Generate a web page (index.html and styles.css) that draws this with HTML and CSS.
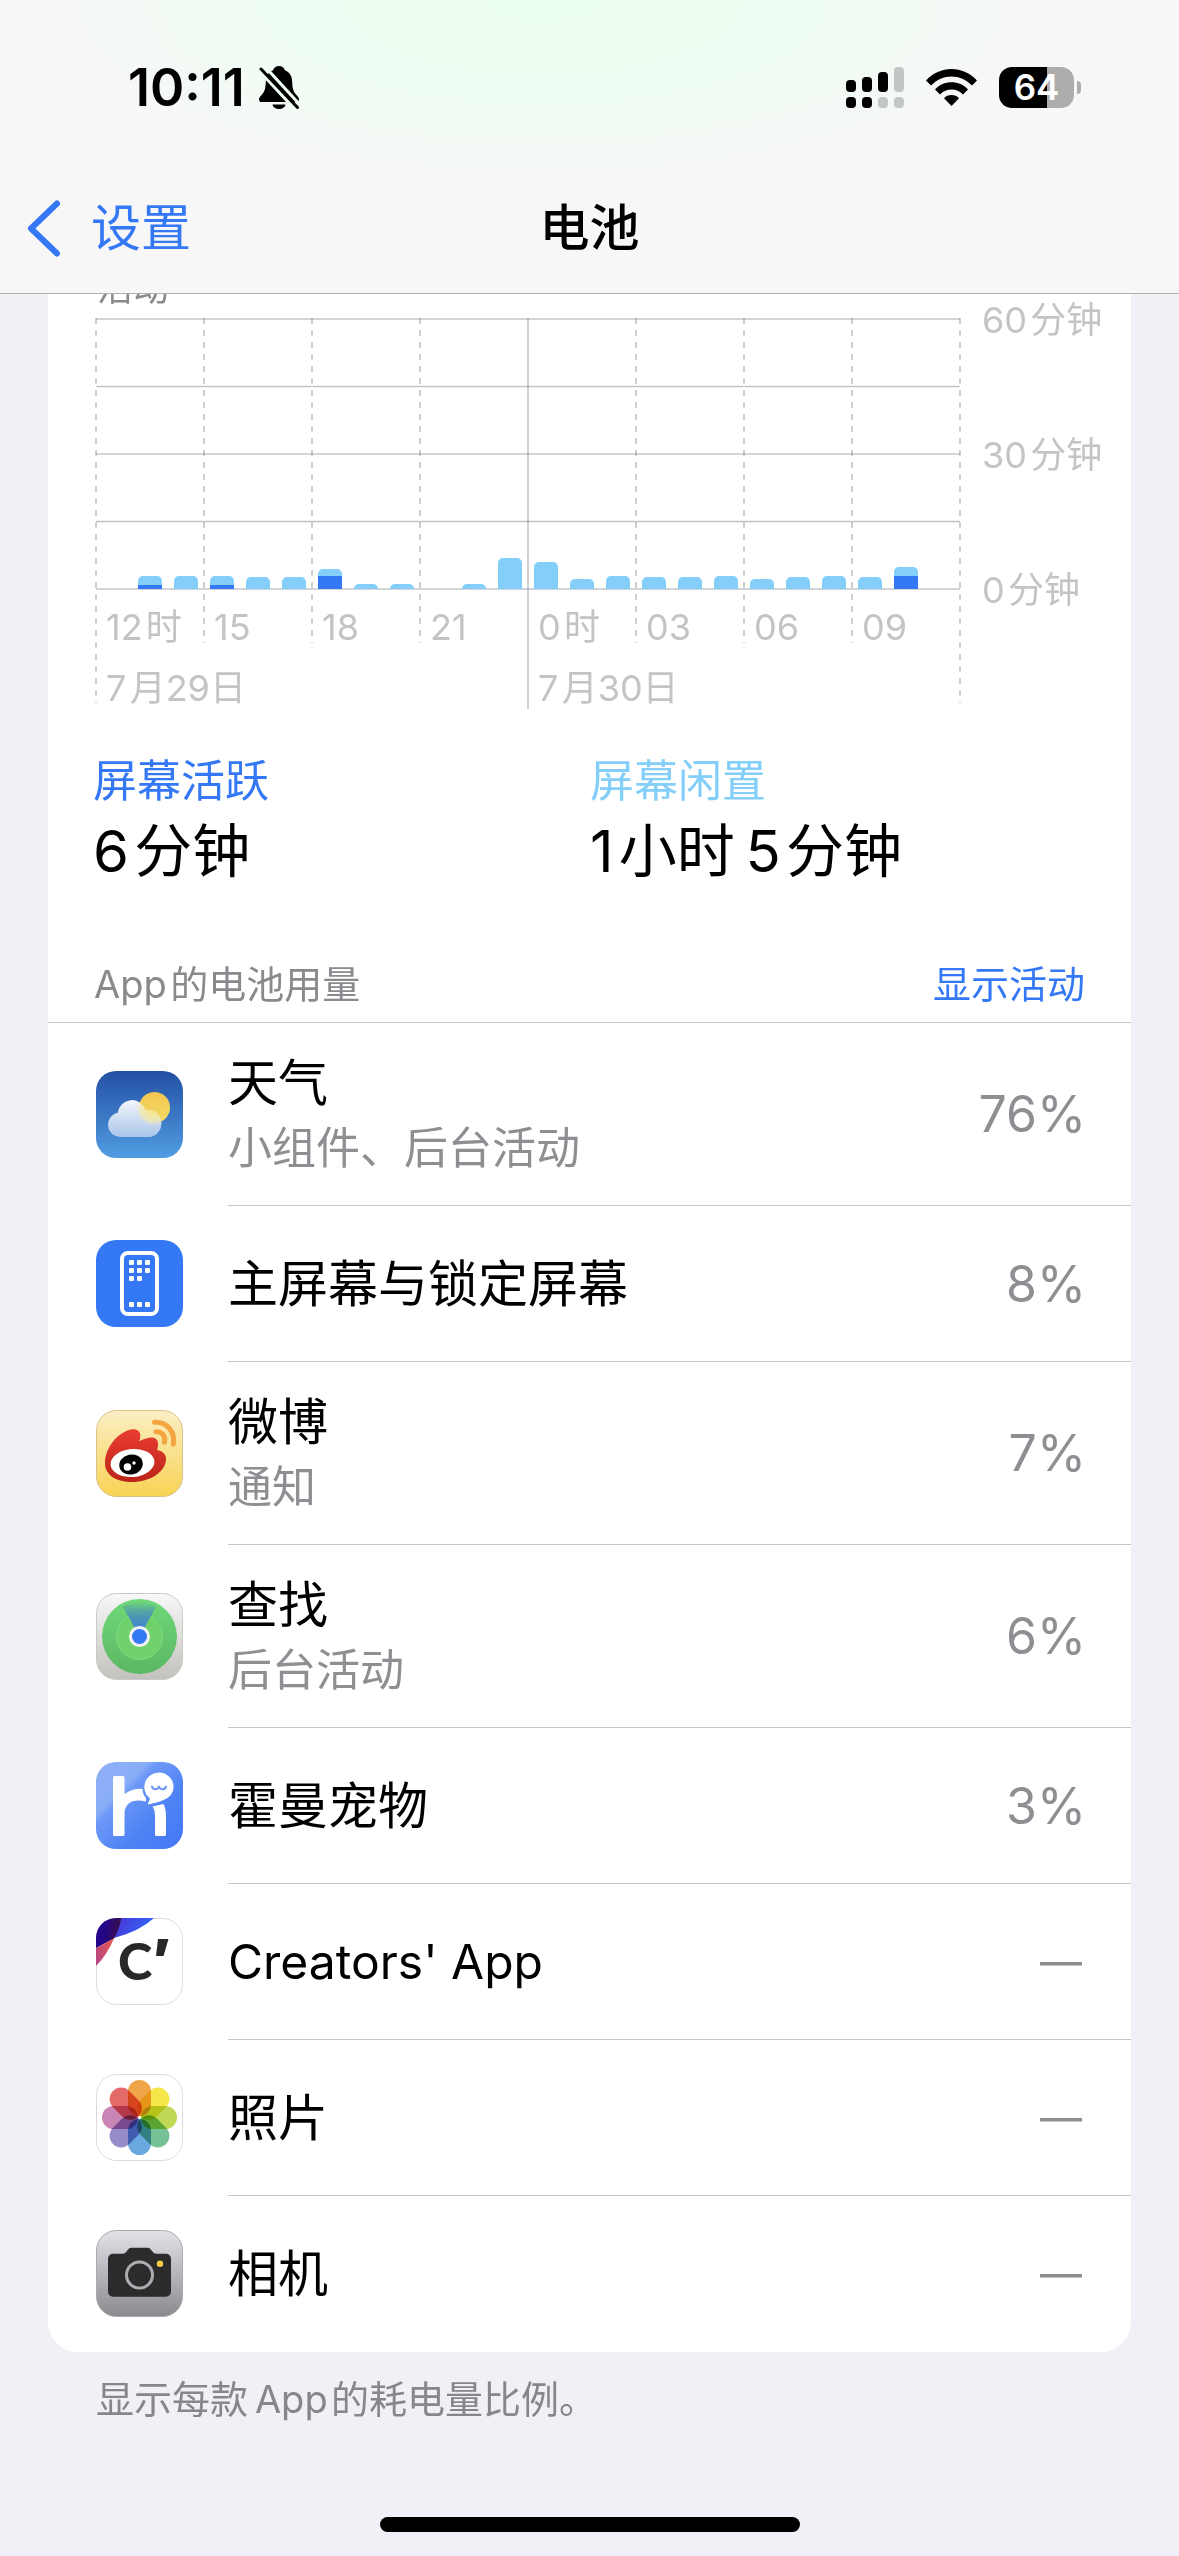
FILE: index.html
```html
<!DOCTYPE html>
<html lang="zh-CN">
<head>
<meta charset="utf-8">
<meta name="viewport" content="width=device-width, initial-scale=1">
<title>电池</title>
<link rel="stylesheet" href="styles.css">
</head>
<body>
<header class="topbar">
  <div class="status">
    <div class="status-left">
      <time class="clock">10:11</time>
      <svg class="bell" viewBox="0 0 40 43" width="40" height="43" aria-label="静音">
        <path d="M20 0c-3 0-5.200 1.800-5.900 4.300C9.600 6 7 10 6.800 15.500 6.600 22 6 25 3 28.500 1 30.800 0 32 0 33.400 0 35 1.200 36 3 36h34c1.800 0 3-1 3-2.600 0-1.400-1-2.600-3-4.900-3-3.500-3.600-6.500-3.800-13C33 10 30.400 6 25.900 4.300 25.200 1.800 23 0 20 0z"/>
        <path d="M13.500 38.500h13c-.5 2.800-3.200 4.500-6.500 4.500s-6-1.700-6.500-4.500z"/>
        <path d="M-2 1.500 37 44" stroke="#effdf2" stroke-width="4"/>
        <path d="M4 -1.500 42 40" stroke="#effdf2" stroke-width="3"/>
        <path d="M2 3 38.500 41.500" stroke="#000" stroke-width="3" stroke-linecap="round"/>
      </svg>
    </div>
    <div class="status-right">
      <svg viewBox="0 0 58 41" width="58" height="41" aria-label="信号">
        <g fill="#000"><rect x="0" y="13" width="10" height="12" rx="4"/><rect x="16" y="10" width="10" height="15" rx="4"/><rect x="32" y="5" width="10" height="20" rx="4"/><rect x="0" y="30" width="10" height="11" rx="4"/><rect x="16" y="30" width="10" height="11" rx="4"/></g>
        <g fill="#c2c7c3"><rect x="48" y="0" width="10" height="25" rx="4"/><rect x="32" y="30" width="10" height="11" rx="4"/><rect x="48" y="30" width="10" height="11" rx="4"/></g>
      </svg>
      <svg class="wifi" viewBox="0 0 51 37" width="51" height="37" aria-label="无线局域网">
        <path d="M0 11.500C7 4 16 0 25.500 0S44 4 51 11.500l-5 5C40 10.500 33 7.500 25.500 7.500S11 10.500 5 16.500z"/>
        <path d="M9 20.500C13.500 15.800 19 13.300 25.500 13.300S37.500 15.800 42 20.500l-5 5c-3.300-3.200-7-4.900-11.500-4.900S17.300 22.300 14 25.500z"/>
        <path d="M18 29.300c2-2 4.500-3.200 7.500-3.200s5.500 1.200 7.500 3.200L25.500 37z"/>
      </svg>
      <div class="battery"><span class="battery-body">64</span><span class="battery-cap"></span></div>
    </div>
  </div>
  <nav class="nav">
    <a class="back" href="#settings">
      <svg viewBox="0 0 33 57" width="33" height="57" aria-hidden="true"><path d="M30 3.500 4 28.500 30 53.500" fill="none" stroke="currentColor" stroke-width="6" stroke-linecap="round" stroke-linejoin="round"/></svg>
      <span>设置</span>
    </a>
    <h1 class="title">电池</h1>
  </nav>
</header>

<main class="content">
  <section class="card">
    <h2 class="chart-title">活动</h2>
    <div class="chart">
      <div class="plot">
        <div class="cols">
          <div class="col col-day">12&#8202;时</div><div class="col">15</div><div class="col">18</div><div class="col">21</div>
          <div class="col col-midnight">0&#8202;时</div><div class="col">03</div><div class="col">06</div><div class="col">09</div><div class="col col-day col-end"></div>
        </div>
        <div class="dates"><span>7&#8202;月29日</span><span>7&#8202;月30日</span></div>
        <div class="rules"><i></i><i class="thin"></i><i></i><i class="thin"></i><i></i></div>
        <div class="bars">
          <span></span>
          <span class="bar" style="height:13px"><i style="height:4px"></i></span>
          <span class="bar" style="height:13px"></span>
          <span class="bar" style="height:13px"><i style="height:4px"></i></span>
          <span class="bar" style="height:12px"></span>
          <span class="bar" style="height:12px"></span>
          <span class="bar" style="height:20px"><i style="height:13px"></i></span>
          <span class="bar" style="height:5px"></span>
          <span class="bar" style="height:5px"></span>
          <span></span>
          <span class="bar" style="height:5px"></span>
          <span class="bar" style="height:31px"></span>
          <span class="bar" style="height:27px"></span>
          <span class="bar" style="height:10px"></span>
          <span class="bar" style="height:13px"></span>
          <span class="bar" style="height:12px"></span>
          <span class="bar" style="height:12px"></span>
          <span class="bar" style="height:13px"></span>
          <span class="bar" style="height:10px"></span>
          <span class="bar" style="height:12px"></span>
          <span class="bar" style="height:13px"></span>
          <span class="bar" style="height:12px"></span>
          <span class="bar" style="height:22px"><i style="height:13px"></i></span>
          <span></span>
        </div>
      </div>
      <div class="scale"><span>60&#8202;分钟</span><span>30&#8202;分钟</span><span>0&#8202;分钟</span></div>
    </div>

    <dl class="stats">
      <div><dt class="active">屏幕活跃</dt><dd>6&#8202;分钟</dd></div>
      <div><dt class="idle">屏幕闲置</dt><dd>1&#8202;小时&#8201;5&#8202;分钟</dd></div>
    </dl>

    <div class="usage-head">
      <h2>App&#8202;的电池用量</h2>
      <button type="button">显示活动</button>
    </div>

    <ul class="apps">
      <li class="app tall">
        <svg class="icon" viewBox="0 0 87 87" aria-hidden="true">
          <defs>
            <linearGradient id="sky" x2="0" y2="1"><stop stop-color="#2450a4"/><stop offset="1" stop-color="#509de2"/></linearGradient>
            <linearGradient id="sun" x2="0" y2="1"><stop stop-color="#f0c550"/><stop offset="1" stop-color="#f6de66"/></linearGradient>
            <linearGradient id="cloud" gradientUnits="userSpaceOnUse" x1="0" y1="28" x2="0" y2="66"><stop stop-color="#f5f8fd"/><stop offset="1" stop-color="#a9c5ea"/></linearGradient>
            <radialGradient id="glow" gradientUnits="userSpaceOnUse" cx="58" cy="37" r="18"><stop stop-color="#f6e477"/><stop offset=".7" stop-color="#f3e9a8" stop-opacity=".8"/><stop offset="1" stop-color="#f3e9a8" stop-opacity="0"/></radialGradient>
            <clipPath id="cloudShape"><path d="M25 66a12.300 12.300 0 0 1-3.300-24.300A14.300 14.300 0 0 1 49.500 39 13.600 13.600 0 1 1 54 66z"/></clipPath>
          </defs>
          <rect width="87" height="87" rx="20" fill="url(#sky)"/>
          <circle cx="58.500" cy="36.500" r="15.500" fill="url(#sun)"/>
          <g clip-path="url(#cloudShape)"><rect width="87" height="87" fill="url(#cloud)"/><circle cx="58" cy="37" r="18" fill="url(#glow)"/></g>
        </svg>
        <div class="row"><div class="names"><span class="name">天气</span><span class="detail">小组件、后台活动</span></div><span class="value">76%</span></div>
      </li>
      <li class="app">
        <svg class="icon" viewBox="0 0 87 87" aria-hidden="true">
          <rect width="87" height="87" rx="20" fill="#3478f6"/>
          <rect x="26" y="13" width="35" height="61" rx="6" fill="none" stroke="#fff" stroke-width="4"/>
          <g fill="#fff"><rect x="33" y="20" width="5" height="5" rx="1"/><rect x="41" y="20" width="5" height="5" rx="1"/><rect x="49" y="20" width="5" height="5" rx="1"/><rect x="33" y="28" width="5" height="5" rx="1"/><rect x="41" y="28" width="5" height="5" rx="1"/><rect x="49" y="28" width="5" height="5" rx="1"/><rect x="33" y="36" width="5" height="5" rx="1"/><rect x="41" y="36" width="5" height="5" rx="1"/><rect x="33" y="62" width="5" height="5" rx="1"/><rect x="41" y="62" width="5" height="5" rx="1"/><rect x="49" y="62" width="5" height="5" rx="1"/></g>
        </svg>
        <div class="row"><span class="name">主屏幕与锁定屏幕</span><span class="value">8%</span></div>
      </li>
      <li class="app tall">
        <svg class="icon" viewBox="0 0 87 87" aria-hidden="true">
          <defs>
            <linearGradient id="wbBg" x2="0" y2="1"><stop stop-color="#fbeec4"/><stop offset="1" stop-color="#f8d354"/></linearGradient>
            <linearGradient id="wbRed" x2="0" y2="1"><stop stop-color="#ea3d33"/><stop offset="1" stop-color="#bb2419"/></linearGradient>
          </defs>
          <rect x=".5" y=".5" width="86" height="86" rx="20" fill="url(#wbBg)" stroke="#d6c38a"/>
          <path d="M9 54C8.500 43 15 31 25 24c7-5 14-6 17.500-3 2.500 2.500 2 6 .9 10.200C49 28.500 57 25.500 60.500 29.500c2.300 2.700 1.500 6.500.7 10.500 5.500 1.200 9 4 8.800 9.500C69.500 62 54 72 36 72 20 72 9.500 65 9 54z" fill="url(#wbRed)"/>
          <ellipse cx="36.500" cy="53" rx="22" ry="14" fill="#fff" transform="rotate(-5 36.500 53)"/>
          <ellipse cx="35" cy="54.500" rx="11.800" ry="10" fill="#000" transform="rotate(-12 35 54.500)"/>
          <circle cx="31.500" cy="57" r="3.800" fill="#fff"/><circle cx="38" cy="53" r="1.700" fill="#fff"/>
          <g fill="none" stroke="#f5a53f" stroke-width="5" stroke-linecap="round"><path d="M58.500 12.300C71 11.500 79.500 22 77.300 34.300"/><path d="M60 21.800c6.500-.2 10 4.700 8.300 10.500"/></g>
        </svg>
        <div class="row"><div class="names"><span class="name">微博</span><span class="detail">通知</span></div><span class="value">7%</span></div>
      </li>
      <li class="app tall">
        <svg class="icon" viewBox="0 0 87 87" aria-hidden="true">
          <defs>
            <linearGradient id="fmBg" x2="0" y2="1"><stop stop-color="#f8f8f8"/><stop offset="1" stop-color="#c3c1bc"/></linearGradient>
            <linearGradient id="fmDisc" x2="0" y2="1"><stop stop-color="#6fd878"/><stop offset="1" stop-color="#5bb764"/></linearGradient>
            <linearGradient id="fmBeam" x2="0" y2="1"><stop stop-color="#3c7bd8" stop-opacity="0"/><stop offset=".35" stop-color="#3f83c8" stop-opacity=".7"/><stop offset="1" stop-color="#3478f6"/></linearGradient>
          </defs>
          <rect x=".5" y=".5" width="86" height="86" rx="20" fill="url(#fmBg)" stroke="#c9c9c9"/>
          <circle cx="43.500" cy="43.500" r="37.500" fill="url(#fmDisc)"/>
          <circle cx="43.500" cy="43.500" r="23" fill="#70d26c" stroke="#80dc83"/>
          <path d="M43.500 43.500 26.500 13q17-8 34 0z" fill="url(#fmBeam)"/>
          <circle cx="43.500" cy="43.500" r="9" fill="#3478f6" stroke="#f2f1f7" stroke-width="3"/>
        </svg>
        <div class="row"><div class="names"><span class="name">查找</span><span class="detail">后台活动</span></div><span class="value">6%</span></div>
      </li>
      <li class="app">
        <svg class="icon" viewBox="0 0 87 87" aria-hidden="true">
          <defs><linearGradient id="petBg" x2="1" y2="1"><stop stop-color="#8fb0f8"/><stop offset=".3" stop-color="#8aadf8"/><stop offset=".36" stop-color="#6c98f6"/><stop offset=".65" stop-color="#4f83f5"/><stop offset="1" stop-color="#4377f5"/></linearGradient></defs>
          <rect width="87" height="87" rx="20" fill="url(#petBg)"/>
          <path d="M18.500 14H27a1.500 1.500 0 0 1 1.500 1.500V32q7-5.500 18-5.300.3 6.500 3.500 9.300V39.500C38 36.500 28.500 40 28.500 52v20.500A1.500 1.500 0 0 1 27 74h-8.500a1.500 1.500 0 0 1-1.500-1.500v-57a1.500 1.500 0 0 1 1.500-1.500z" fill="#fff"/>
          <path d="M56.500 44.500 67.500 42q2.500 4.500 2.500 12v18.500a1.500 1.500 0 0 1-1.500 1.500h-8a1.500 1.500 0 0 1-1.500-1.500V54q0-6-2.500-9.500z" fill="#fff"/>
          <path d="M63 10.500A14.500 14.500 0 0 1 77.500 25C77.500 35 68 39.500 51.700 42.500L54 36.500A14.500 14.500 0 0 1 63 10.500z" fill="#fff"/>
          <path d="M56 24.500c.5 3.500 6 3.500 7 0 1 3.500 6.500 3.500 7 0" fill="none" stroke="#6e98f5" stroke-width="2" stroke-linecap="round" stroke-linejoin="round"/>
        </svg>
        <div class="row"><span class="name">霍曼宠物</span><span class="value">3%</span></div>
      </li>
      <li class="app">
        <svg class="icon" viewBox="0 0 87 87" aria-hidden="true">
          <defs>
            <clipPath id="tile"><rect width="87" height="87" rx="20"/></clipPath>
            <linearGradient id="crBlue" x2="1" y2=".3"><stop stop-color="#4a32d6"/><stop offset="1" stop-color="#3265f6"/></linearGradient>
            <linearGradient id="crDark" x2="1" y2=".2"><stop offset=".4" stop-color="#230688"/><stop offset="1" stop-color="#3a1047"/></linearGradient>
            <linearGradient id="crRed" x1="1" x2="0" y2=".6"><stop stop-color="#ee5a4a"/><stop offset="1" stop-color="#b8487e"/></linearGradient>
          </defs>
          <rect x=".5" y=".5" width="86" height="86" rx="20" fill="#fff" stroke="#dcdcdc"/>
          <g clip-path="url(#tile)">
            <path d="M25 0h33Q44 13 18 20z" fill="url(#crBlue)"/>
            <path d="M0 0h25.500Q23 12 18 20.500L0 30z" fill="url(#crDark)"/>
            <path d="M0 30 18 20.500Q11 37 0 48z" fill="url(#crRed)"/>
          </g>
          <text class="mark" x="22" y="62">C</text>
          <path d="M62 21h10.500L67.500 38H60z" fill="#282828"/>
        </svg>
        <div class="row"><span class="name latin">Creators' App</span><span class="value none">—</span></div>
      </li>
      <li class="app">
        <svg class="icon" viewBox="0 0 87 87" aria-hidden="true">
          <rect x=".5" y=".5" width="86" height="86" rx="20" fill="#fff" stroke="#dcdcdc"/>
          <g class="petals">
            <rect x="32" y="6" width="23" height="36" rx="11.500" fill="#f0a548"/>
            <rect x="32" y="6" width="23" height="36" rx="11.500" fill="#f5e64c" transform="rotate(45 43.500 43.500)"/>
            <rect x="32" y="6" width="23" height="36" rx="11.500" fill="#c0d857" transform="rotate(90 43.500 43.500)"/>
            <rect x="32" y="6" width="23" height="36" rx="11.500" fill="#76c294" transform="rotate(135 43.500 43.500)"/>
            <rect x="32" y="6" width="23" height="36" rx="11.500" fill="#69a8de" transform="rotate(180 43.500 43.500)"/>
            <rect x="32" y="6" width="23" height="36" rx="11.500" fill="#988bca" transform="rotate(225 43.500 43.500)"/>
            <rect x="32" y="6" width="23" height="36" rx="11.500" fill="#c985b5" transform="rotate(270 43.500 43.500)"/>
            <rect x="32" y="6" width="23" height="36" rx="11.500" fill="#e46a68" transform="rotate(315 43.500 43.500)"/>
          </g>
        </svg>
        <div class="row"><span class="name">照片</span><span class="value none">—</span></div>
      </li>
      <li class="app">
        <svg class="icon" viewBox="0 0 87 87" aria-hidden="true">
          <defs><linearGradient id="camBg" x2="0" y2="1"><stop stop-color="#e3e2e8"/><stop offset="1" stop-color="#8b8a8f"/></linearGradient></defs>
          <rect x=".5" y=".5" width="86" height="86" rx="20" fill="url(#camBg)" stroke="#a9a9ae"/>
          <path d="M17 23.700h9.500c5 0 4.500-6 9-6h16c4.500 0 4 6 9 6H70a5 5 0 0 1 5 5v33a5 5 0 0 1-5 5H17a5 5 0 0 1-5-5v-33a5 5 0 0 1 5-5z" fill="#2c2c2c"/>
          <circle cx="43.500" cy="45" r="13" fill="none" stroke="#adadb3" stroke-width="3"/>
          <circle cx="64" cy="33.700" r="3.200" fill="#f8ce46"/>
        </svg>
        <div class="row"><span class="name">相机</span><span class="value none">—</span></div>
      </li>
    </ul>
  </section>
  <p class="footnote">显示每款&#8201;App&#8202;的耗电量比例。</p>
</main>
<div class="home"></div>
</body>
</html>
```
FILE: styles.css
```css
* { box-sizing: border-box; }

body {
  margin: 0;
  min-height: 100vh;
  display: flex;
  flex-direction: column;
  background: #f1f0f6;
  color: #000;
  font-family: Inter, "Noto Sans CJK SC", sans-serif;
  font-size: 50px;
}

h1, h2, p, ul, dl, dd { margin: 0; padding: 0; font-weight: 400; }
ul { list-style: none; }
svg { display: block; flex: none; }

/* Top bar */
.topbar {
  position: sticky;
  top: 0;
  z-index: 1;
  border-bottom: 1px solid #b0b0b3;
  background: radial-gradient(ellipse 44% 190px at 46% 0, #ecffee 0, #effdf2 50%, #f7f7f7 100%) #f7f7f7;
}
.status {
  display: flex;
  justify-content: space-between;
  align-items: center;
  height: 175px;
  padding: 0 98px 0 128px;
}
.status-left, .status-right { display: flex; align-items: center; }
.status-left { gap: 14px; }
.status-right { gap: 22px; }
.clock { font-size: 52px; font-weight: 600; line-height: 60px; }
.battery { display: flex; align-items: center; gap: 3px; }
.battery-body {
  width: 75px;
  height: 41px;
  border-radius: 13px;
  background: linear-gradient(90deg, #000 64%, #adadad 64%);
  color: #fff;
  font-size: 35px;
  font-weight: 600;
  line-height: 41px;
  text-align: center;
}
.battery-cap { width: 4px; height: 13px; border-radius: 0 6px 6px 0; background: #adadad; }

.nav {
  display: grid;
  grid-template-columns: 1fr auto 1fr;
  align-items: center;
  height: 118px;
  padding: 0 27px 12px;
  line-height: 74px;
}
.back { display: flex; align-items: center; gap: 31px; color: #3478f6; text-decoration: none; }
.title { font-size: 50px; font-weight: 500; }

/* Battery card */
.content { flex: 1; padding: 0 48px; }
.card {
  margin-top: -40px;
  padding-top: 12px;
  border-radius: 30px;
  background: #fff;
}
.chart-title { padding-left: 49px; color: #8a8a8e; font-size: 36px; line-height: 44px; }

.chart {
  display: grid;
  grid-template-columns: 1fr 119px;
  gap: 22px;
  padding: 8px 30px 0 48px;
  color: #c4c4c6;
  font-size: 36px;
  line-height: 40px;
}
.plot { display: grid; }
.plot > * { grid-area: 1 / 1; }
.cols {
  --line: #d0d0d2;
  display: grid;
  grid-template-columns: repeat(8, 1fr) 2px;
  height: 391px;
  margin: 0 -1px;
}
.col {
  height: 325px;
  padding: 289px 0 0 11px;
  background: repeating-linear-gradient(var(--line) 0 6px, transparent 6px 12px) 0 0 / 2px 100% no-repeat;
  white-space: nowrap;
}
.col-day { height: 385px; }
.col-end { padding: 0; }
.col-midnight { height: 391px; background-image: linear-gradient(var(--line), var(--line)); }
.dates { display: grid; grid-template-columns: 1fr 1fr; padding-top: 350px; }
.dates span { padding-left: 10px; }
.rules { display: flex; flex-direction: column; justify-content: space-between; height: 272px; }
.rules i { height: 2px; background: rgba(60, 60, 67, .22); }
.rules .thin { height: 1px; box-shadow: 0 1px rgba(60, 60, 67, .08), 0 -1px rgba(60, 60, 67, .08); background: rgba(60, 60, 67, .3); }
.bars {
  display: grid;
  grid-template-columns: repeat(24, 1fr);
  align-items: end;
  justify-items: center;
  height: 271px;
}
.bar {
  display: flex;
  align-items: flex-end;
  width: 24px;
  border-radius: 5px 5px 0 0;
  background: #83cffa;
}
.bar i { width: 100%; background: #3478f6; }
.scale {
  display: flex;
  flex-direction: column;
  justify-content: space-between;
  height: 310px;
  margin-top: -18px;
  white-space: nowrap;
}

.stats { display: grid; grid-template-columns: 497px 1fr; padding: 42px 48px 0 45px; }
.stats dt { font-size: 44px; line-height: 60px; }
.stats dd { font-size: 58px; line-height: 80px; }
.active { color: #3478f6; }
.idle { color: #83cffa; }

/* Per-app usage */
.usage-head {
  display: flex;
  justify-content: space-between;
  align-items: center;
  padding: 67px 46px 12px;
  border-bottom: 1px solid #c6c6c8;
}
.usage-head h2, .usage-head button { font: inherit; font-size: 38px; line-height: 52px; }
.usage-head h2 { color: #8a8a8e; }
.usage-head button { padding: 0; border: 0; background: none; color: #3478f6; }

.app { display: flex; align-items: center; gap: 45px; padding-left: 48px; }
.icon { width: 87px; height: 87px; margin-bottom: 1px; }
.tall .icon { margin-bottom: 0; }
.row {
  flex: 1;
  display: flex;
  justify-content: space-between;
  align-items: center;
  height: 156px;
  padding-right: 45px;
  border-bottom: 1px solid #c6c6c8;
}
.tall .row { height: 183px; }
.app:last-child .row { border-bottom: 0; }
.names { display: flex; flex-direction: column; }
.name { line-height: 68px; }
.latin { font-size: 48px; }
.detail { color: #8e8e93; font-size: 44px; line-height: 62px; }
.value { color: #8e8e93; }
.none { padding-right: 4px; font-size: 42px; line-height: 60px; }
.mark { fill: #282828; font-family: Lato, sans-serif; font-size: 52px; font-weight: 900; }
.petals rect { mix-blend-mode: multiply; }

.footnote { padding: 20px 48px; color: #86868b; font-size: 38px; line-height: 54px; }
.home { width: 420px; height: 15px; margin: 0 auto 24px; border-radius: 8px; background: #000; }
```
